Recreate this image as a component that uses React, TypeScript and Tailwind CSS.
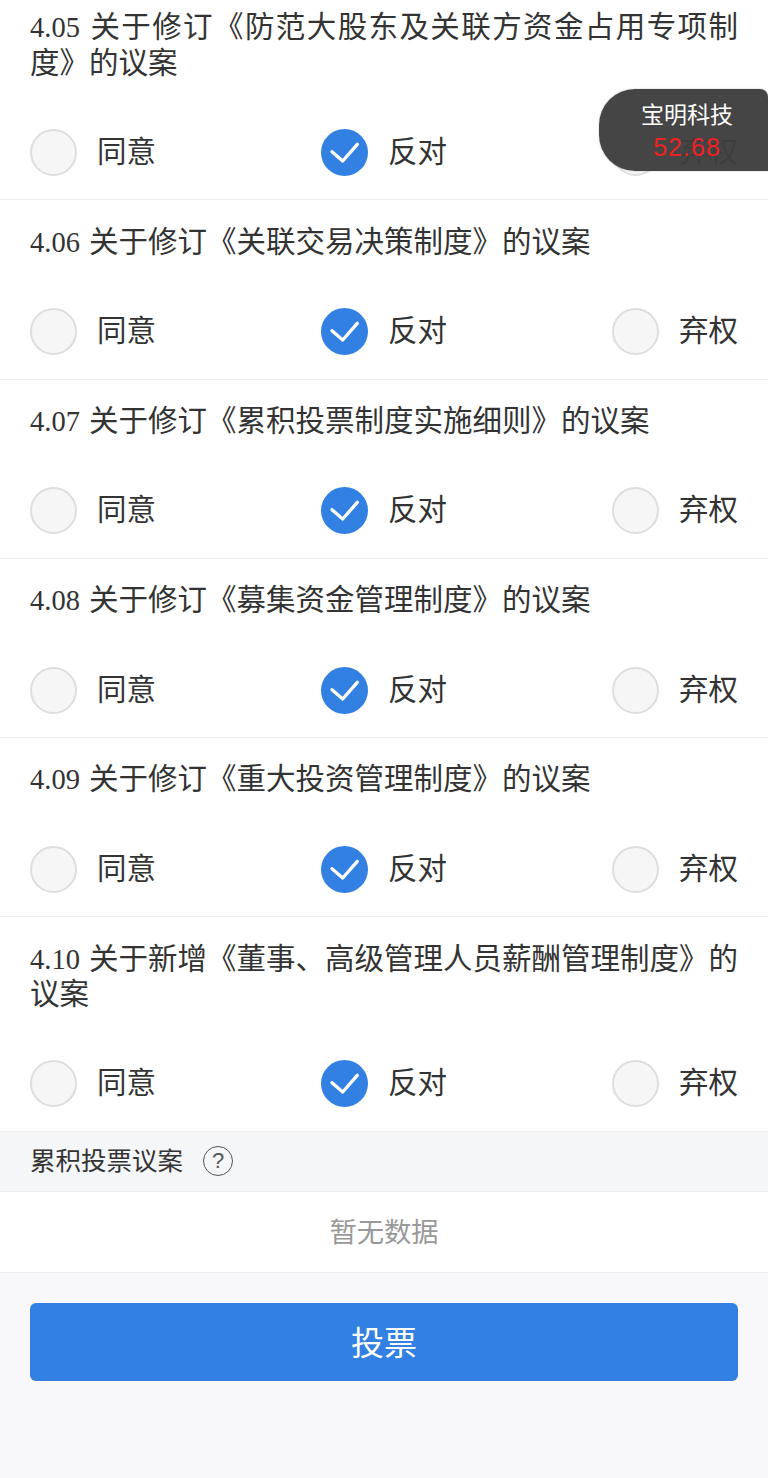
import React from 'react';

const proposals = [
  { no: '4.05', title: '关于修订《防范大股东及关联方资金占用专项制度》的议案', first: true },
  { no: '4.06', title: '关于修订《关联交易决策制度》的议案' },
  { no: '4.07', title: '关于修订《累积投票制度实施细则》的议案' },
  { no: '4.08', title: '关于修订《募集资金管理制度》的议案' },
  { no: '4.09', title: '关于修订《重大投资管理制度》的议案' },
  { no: '4.10', title: '关于新增《董事、高级管理人员薪酬管理制度》的议案' },
];

function Option({ label, checked }: { label: string; checked?: boolean }) {
  return (
    <div className="flex items-center gap-[20px]">
      {checked ? (
        <svg viewBox="0 0 47 47" className="w-[47px] h-[47px]">
          <circle cx="23.5" cy="23.5" r="23.5" fill="#3280e2" />
          <path d="M11 22.7 L21.7 32 L36.3 15.3" fill="none" stroke="#fff" strokeWidth="3.3" strokeLinecap="round" strokeLinejoin="round" />
        </svg>
      ) : (
        <div className="w-[47px] h-[47px] rounded-full bg-[#f6f6f6] border-2 border-[#dedede]" />
      )}
      <span className="text-[29.5px] leading-[41px] pb-[6px] text-[#333]">{label}</span>
    </div>
  );
}

function Proposal({ no, title, first }: { no: string; title: string; first?: boolean }) {
  return (
    <div className={`px-[30px] pb-[23.5px] border-b border-[#eeeeee] ${first ? 'pt-[7px]' : 'pt-[21.25px]'}`}>
      <p className="text-[29.5px] leading-[35.25px] text-[#333] text-justify">
        <span className="mr-[2px] text-[28.5px] leading-none font-['Liberation_Serif',serif]">{no} </span>
        {title}
      </p>
      <div className="flex justify-between mt-[51px]">
        <Option label="同意" />
        <Option label="反对" checked />
        <Option label="弃权" />
      </div>
    </div>
  );
}

export default function App() {
  return (
    <div className="relative w-[768px] h-[1478px] overflow-hidden bg-[#f8f8fa] font-['Noto_Sans_CJK_SC',sans-serif]">
      <div className="bg-white">
        {proposals.map(p => (
          <Proposal key={p.no} no={p.no} title={p.title} first={p.first} />
        ))}
      </div>

      <div className="h-[60px] px-[30px] flex items-center bg-[#f5f6f8] border-b border-[#eeeeee]">
        <span className="text-[25.5px] pb-[4px] text-[#333]">累积投票议案</span>
        <span className="ml-[20px] w-[30px] h-[30px] rounded-full border-[1.5px] border-[#555] flex items-center justify-center text-[22px] leading-none text-[#555] font-['Liberation_Sans_Narrow','Liberation_Sans',sans-serif]">?</span>
      </div>

      <div className="h-[81px] pb-[2px] bg-white border-b border-[#eeeeee] flex items-center justify-center text-[27.3px] text-[#999]">
        暂无数据
      </div>

      <div className="px-[30px] pt-[30px]">
        <button className="w-full h-[78px] rounded-[6px] bg-[#3280e2] text-white text-[33px]">投票</button>
      </div>

      {/* floating stock ticker */}
      <div className="absolute top-[89px] right-0 w-[169px] h-[82px] rounded-l-[36px] rounded-tr-[8px] bg-[#3f3f3f]/97 shadow-[0_0_2px_rgba(0,0,0,0.25)] flex flex-col items-center pl-[7px] pt-[9px]">
        <span className="text-[23px] leading-[30px] text-white">宝明科技</span>
        <span className="text-[25px] leading-[38px] tracking-[1px] text-[#ee2222] font-['Liberation_Sans',sans-serif]">52.68</span>
      </div>
    </div>
  );
}
